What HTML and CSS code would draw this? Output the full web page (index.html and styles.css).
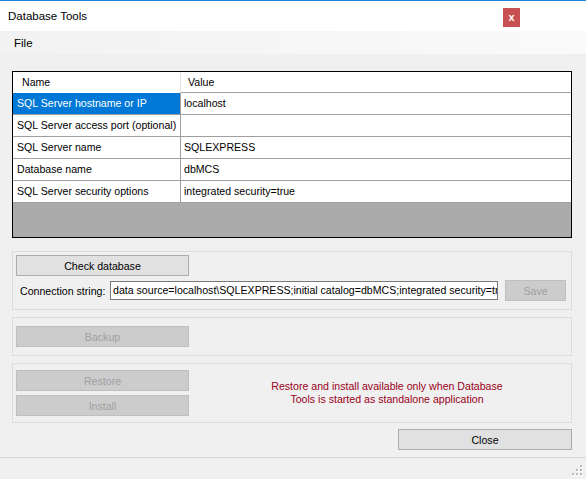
FILE: index.html
```html
<!DOCTYPE html>
<html>
<head>
<meta charset="utf-8">
<title>Database Tools</title>
<link rel="stylesheet" href="styles.css">
</head>
<body>
<div class="window">
  <div class="titlebar">
    <span class="title">Database Tools</span>
    <span class="close-x">x</span>
  </div>
  <div class="menubar"><span class="menu-item">File</span></div>
  <div class="main">
    <div class="grid">
      <div class="row head">
        <div class="cell c1">Name</div>
        <div class="cell c2">Value</div>
      </div>
      <div class="row">
        <div class="cell c1 selected">SQL Server hostname or IP</div>
        <div class="cell c2">localhost</div>
      </div>
      <div class="row">
        <div class="cell c1">SQL Server access port (optional)</div>
        <div class="cell c2"></div>
      </div>
      <div class="row">
        <div class="cell c1">SQL Server name</div>
        <div class="cell c2">SQLEXPRESS</div>
      </div>
      <div class="row">
        <div class="cell c1">Database name</div>
        <div class="cell c2">dbMCS</div>
      </div>
      <div class="row">
        <div class="cell c1">SQL Server security options</div>
        <div class="cell c2">integrated security=true</div>
      </div>
      <div class="grid-empty"></div>
    </div>

    <div class="group g1">
      <button class="btn wide">Check database</button>
      <div class="conn-row">
        <span class="conn-label">Connection string:</span>
        <div class="textbox">data source=localhost\SQLEXPRESS;initial catalog=dbMCS;integrated security=true</div>
        <button class="btn disabled save">Save</button>
      </div>
    </div>

    <div class="group g2">
      <button class="btn wide disabled">Backup</button>
    </div>

    <div class="group g3">
      <div class="btn-col">
        <button class="btn wide disabled">Restore</button>
        <button class="btn wide disabled">Install</button>
      </div>
      <div class="note">Restore and install available only when Database<br>Tools is started as standalone application</div>
    </div>

    <div class="close-row">
      <button class="btn close-btn">Close</button>
    </div>
  </div>
  <div class="status">
    <svg class="grip" width="12" height="12" viewBox="0 0 12 12">
      <rect x="9" y="1" width="2" height="2" fill="#fff"/>
      <rect x="5" y="5" width="2" height="2" fill="#fff"/>
      <rect x="9" y="5" width="2" height="2" fill="#fff"/>
      <rect x="1" y="9" width="2" height="2" fill="#fff"/>
      <rect x="5" y="9" width="2" height="2" fill="#fff"/>
      <rect x="9" y="9" width="2" height="2" fill="#fff"/>
      <rect x="8" y="0" width="2" height="2" fill="#b8b8b8"/>
      <rect x="4" y="4" width="2" height="2" fill="#b8b8b8"/>
      <rect x="8" y="4" width="2" height="2" fill="#b8b8b8"/>
      <rect x="0" y="8" width="2" height="2" fill="#b8b8b8"/>
      <rect x="4" y="8" width="2" height="2" fill="#b8b8b8"/>
      <rect x="8" y="8" width="2" height="2" fill="#b8b8b8"/>
    </svg>
  </div>
</div>
</body>
</html>
```

FILE: styles.css
```css
* { box-sizing: border-box; }
html, body { margin: 0; padding: 0; }
body {
  width: 586px;
  height: 479px;
  overflow: hidden;
  background: #f0f0f0;
  font-family: "Liberation Sans", Arial, sans-serif;
  font-size: 10.6px;
  color: #000;
}
.window {
  display: flex;
  flex-direction: column;
  height: 479px;
}
.titlebar {
  height: 31px;
  border-top: 1px solid #1c84d8;
  background: #fff;
  display: flex;
  align-items: flex-start;
}
.title {
  font-size: 11.5px;
  padding-left: 8px;
  line-height: 30px;
}
.close-x {
  margin-left: auto;
  margin-right: 66px;
  margin-top: 7px;
  width: 17px;
  height: 19px;
  background: #c75050;
  color: #fff;
  font-weight: bold;
  font-size: 11px;
  line-height: 19px;
  text-align: center;
}
.menubar {
  height: 23px;
  background: linear-gradient(to right, #f2f2f2, #fafafa);
  display: flex;
  align-items: center;
}
.menu-item {
  padding-left: 14px;
  font-size: 11.5px;
}
.main {
  padding: 17px 14px 0 12px;
  display: flex;
  flex-direction: column;
}
.grid {
  width: 560px;
  height: 167px;
  border: 1px solid #000;
  background: #ababab;
  display: flex;
  flex-direction: column;
}
.row {
  display: flex;
  height: 22px;
  background: #fff;
  border-bottom: 1px solid #a0a0a0;
}
.row.head {
  height: 21px;
  border-bottom: none;
}
.cell {
  line-height: 21px;
  white-space: nowrap;
  overflow: hidden;
}
.c1 {
  width: 168px;
  padding-left: 4px;
  border-right: 1px solid #a0a0a0;
}
.c2 {
  flex: 1;
  padding-left: 3px;
}
.head .cell { line-height: 20px; }
.head .c1 { padding-left: 9px; border-right-color: #e5e5e5; }
.head .c2 { padding-left: 7px; border-bottom: 1px solid #a0a0a0; }
.selected {
  background: #0078d7;
  color: #fff;
}
.grid-empty { flex: 1; }

.group {
  width: 560px;
  border: 1px solid #dcdcdc;
  padding-left: 3px;
}
.g1 {
  margin-top: 13px;
  height: 59px;
  padding-top: 3px;
}
.g2 {
  margin-top: 7px;
  height: 39px;
  padding-top: 8px;
}
.g3 {
  margin-top: 7px;
  height: 60px;
  padding-top: 6px;
  display: flex;
}
.btn {
  display: block;
  font-family: "Liberation Sans", Arial, sans-serif;
  font-size: 10.6px;
  height: 21px;
  padding: 0;
  margin: 0;
  background: #e1e1e1;
  border: 1px solid #adadad;
  color: #000;
}
.btn.wide { width: 173px; }
.btn.disabled {
  background: #cccccc;
  border-color: #bfbfbf;
  color: #a0a0a0;
}
.conn-row {
  display: flex;
  align-items: center;
  margin-top: 4px;
  height: 21px;
}
.conn-label {
  padding-left: 4px;
  width: 94px;
}
.textbox {
  width: 388px;
  height: 19px;
  background: #fff;
  border: 1px solid #7a7a7a;
  padding-left: 2px;
  line-height: 17px;
  white-space: nowrap;
  overflow: hidden;
  text-overflow: clip;
}
.save {
  width: 61px;
  margin-left: 7px;
}
.btn-col {
  display: flex;
  flex-direction: column;
  gap: 4px;
}
.note {
  flex: 1;
  display: flex;
  align-items: center;
  justify-content: center;
  text-align: center;
  padding-left: 14px;
  padding-bottom: 6px;
  line-height: 13px;
  color: #9a0020;
}
.close-row {
  display: flex;
  justify-content: flex-end;
  margin-top: 6px;
}
.close-btn { width: 174px; }
.status {
  margin-top: auto;
  height: 22px;
  border-top: 1px solid #d9d9d9;
  display: flex;
  justify-content: flex-end;
  align-items: flex-end;
  padding-right: 2px;
  padding-bottom: 2px;
}
.grip { display: block; }
```
